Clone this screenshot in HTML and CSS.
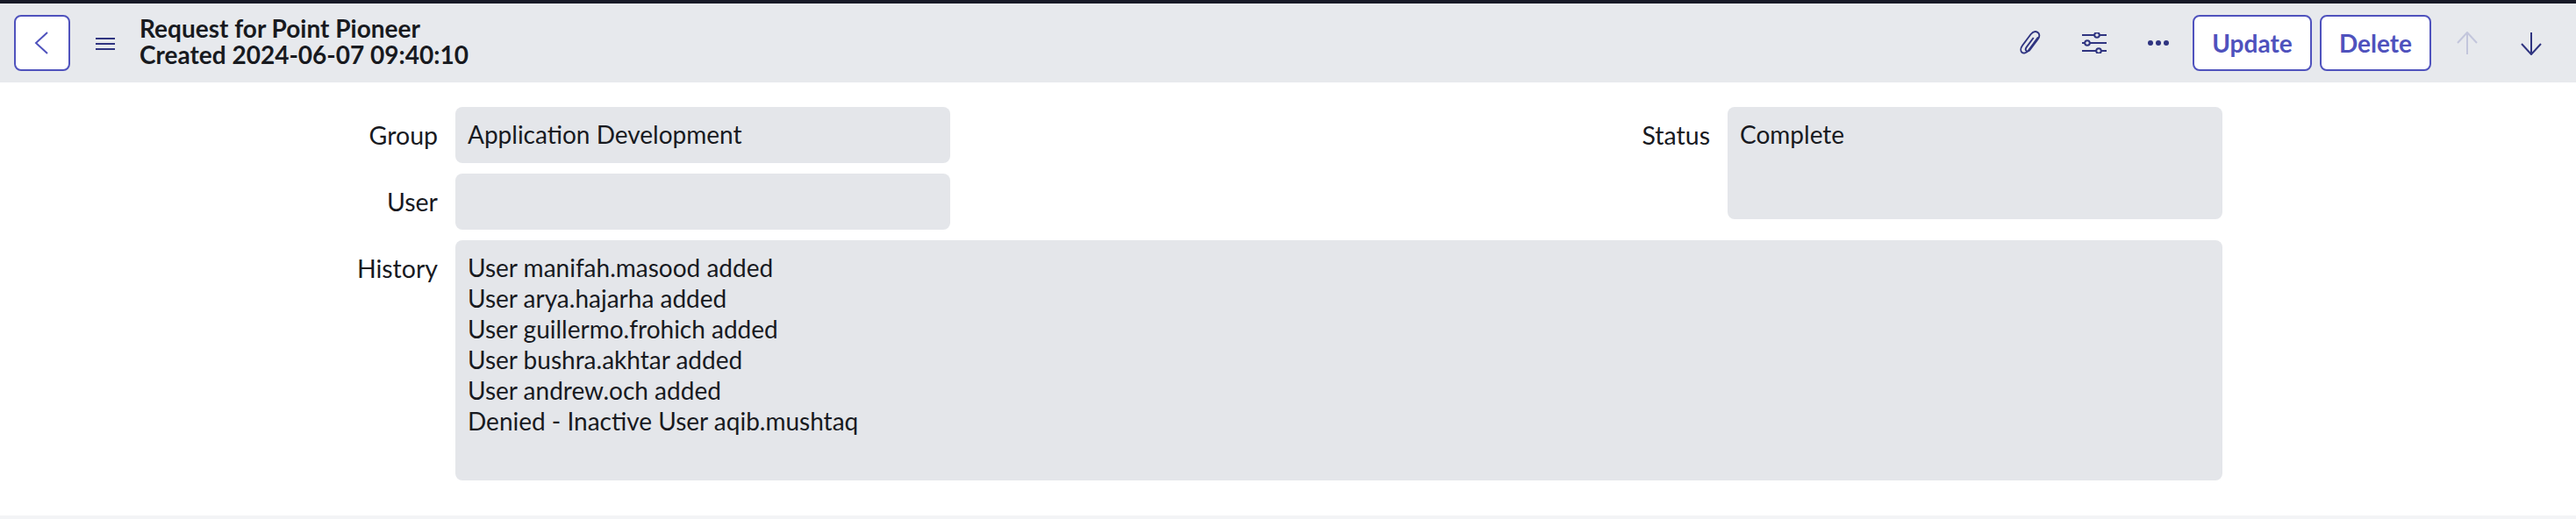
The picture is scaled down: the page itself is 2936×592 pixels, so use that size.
FILE: index.html
```html
<!DOCTYPE html>
<html>
<head>
    <link rel="stylesheet" href="styles.css">
</head>
<body>
<div class="header">
    <button class="back-button">
        <svg width="24" height="26" viewBox="0 0 24 26"><path d="M18 1 L5 13 L18 25" class="line"/></svg>
    </button>
    <div class="menu-icon">
        <svg width="22" height="16" viewBox="0 0 22 16"><path d="M0 2H22M0 8H22M0 14H22" class="line dark"/></svg>
    </div>
    <div class="title">
        <div>Request for Point Pioneer</div>
        <div>Created 2024-06-07 09:40:10</div>
    </div>
    <div class="actions">
        <div class="icon-button">
            <svg width="26" height="28" viewBox="0 0 26 30"><path d="M22.5 8 L11 24 C8.5 27.5 4.5 28 2.8 26.5 C1 25 1 21.5 3.5 18 L13.5 4.5 C16 1.3 19.5 0.5 22 2 C24.6 3.7 24.7 7 22.5 10 L12.5 23.5 C11.2 25.2 9.3 25.5 8.2 24.6 C7 23.7 7.2 21.8 8.5 20 L17 8.5" class="line dark"/></svg>
        </div>
        <div class="icon-button">
            <svg width="28" height="24" viewBox="0 0 28 24"><path d="M0 3H14M20 3H28M0 12H3M9 12H28M0 21H16M22 21H28" class="line dark"/><circle cx="17" cy="3" r="2.8" class="line dark"/><circle cx="6" cy="12" r="2.8" class="line dark"/><circle cx="19" cy="21" r="2.8" class="line dark"/></svg>
        </div>
        <div class="icon-button">
            <svg width="24" height="8" viewBox="0 0 24 8"><circle cx="3" cy="4" r="3" class="dot"/><circle cx="12" cy="4" r="3" class="dot"/><circle cx="21" cy="4" r="3" class="dot"/></svg>
        </div>
        <button class="text-button update">Update</button>
        <button class="text-button delete">Delete</button>
        <div class="icon-button">
            <svg width="24" height="27" viewBox="0 0 24 27"><path d="M12 26V1M1 13L12 1L23 13" class="line faded"/></svg>
        </div>
        <div class="icon-button">
            <svg width="24" height="27" viewBox="0 0 24 27"><path d="M12 1V26M1 14L12 26L23 14" class="line dark"/></svg>
        </div>
    </div>
</div>
<div class="form">
    <div class="label">Group</div>
    <div class="field">Application Development</div>
    <div class="label status-label">Status</div>
    <div class="field status-field">Complete</div>
    <div class="label first">User</div>
    <div class="field"></div>
    <div class="label first">History</div>
    <div class="field history-field">User manifah.masood added
User arya.hajarha added
User guillermo.frohich added
User bushra.akhtar added
User andrew.och added
Denied - Inactive User aqib.mushtaq</div>
</div>
<div class="footer-line"></div>
</body>
</html>
```

FILE: styles.css
```css
body {
    font-family: "Lato", sans-serif;
    margin: 0;
    padding: 0;
    height: 592px;
    overflow: hidden;
    display: flex;
    flex-direction: column;
    background-color: #fff;
    color: #181a1f;
}

.header {
    display: flex;
    align-items: center;
    height: 90px;
    padding: 0 19px 0 16px;
    border-top: 4px solid #181a27;
    background-color: #e7e9ed;
    flex-shrink: 0;
}

.line {
    fill: none;
    stroke: #4f52bd;
    stroke-width: 2;
}

.line.dark {
    stroke: #2f3480;
}

.line.faded {
    stroke: #c3c6dc;
}

.dot {
    fill: #2f3480;
}

button {
    font-family: "Lato", sans-serif;
    background-color: #fff;
    border: 2px solid #4f52bd;
    border-radius: 8px;
    height: 64px;
    padding: 0;
}

.back-button {
    width: 64px;
    display: flex;
    align-items: center;
    justify-content: center;
}

.menu-icon {
    display: flex;
    margin-left: 29px;
    margin-top: 2px;
}

.title {
    margin-left: 28px;
    margin-bottom: 4px;
    font-size: 28px;
    font-weight: bold;
    line-height: 30px;
}

.actions {
    margin-left: auto;
    display: flex;
    align-items: center;
    gap: 9px;
}

.icon-button {
    width: 64px;
    height: 64px;
    display: flex;
    align-items: center;
    justify-content: center;
}

.text-button {
    font-size: 28px;
    font-weight: bold;
    color: #4f52bd;
}

.update {
    width: 136px;
    margin-left: -2px;
}

.delete {
    width: 127px;
}

.form {
    display: grid;
    grid-template-columns: 499px 564px 846px 564px;
    grid-template-rows: 64px 64px 274px;
    column-gap: 20px;
    row-gap: 12px;
    padding-top: 28px;
    font-size: 28px;
    line-height: 35px;
}

.label {
    text-align: right;
    padding-top: 15px;
    font-size: 28.5px;
}

.label.first {
    grid-column: 1;
}

.field {
    background-color: #e4e6ea;
    border-radius: 8px;
    padding: 14px;
    box-sizing: border-box;
}

.status-label {
    grid-column: 3;
    grid-row: 1;
}

.status-field {
    grid-column: 4;
    grid-row: 1 / span 2;
    height: 128px;
}

.history-field {
    grid-column: 2 / span 3;
    white-space: pre-line;
}

.footer-line {
    margin-top: auto;
    height: 4px;
    background-color: #f3f4f6;
}
```
